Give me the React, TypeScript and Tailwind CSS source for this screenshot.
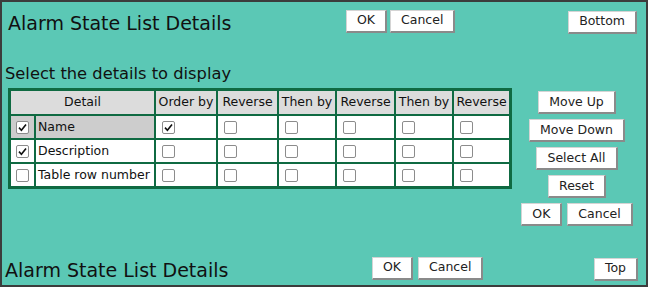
import * as React from 'react';

const FONT = { fontFamily: '"DejaVu Sans", Verdana, sans-serif' };

function Btn({ children }: { children: React.ReactNode }) {
  return (
    <button
      className="h-[23px] px-[10px] bg-white text-[12.5px] leading-none text-[#222] border-t border-l border-[#d4d4d4] border-r-2 border-b-2 border-r-[#8a8a8a] border-b-[#8a8a8a]"
      style={FONT}
    >
      {children}
    </button>
  );
}

function Check({ checked = false }: { checked?: boolean }) {
  return (
    <span className="inline-flex h-[13px] w-[13px] items-center justify-center rounded-[2px] border border-[#8c8c8c] bg-white">
      {checked && (
        <svg width="11" height="11" viewBox="0 0 11 11">
          <path d="M2 5.6 L4.4 8.2 L9 2.4" fill="none" stroke="#111" strokeWidth="1.6" />
        </svg>
      )}
    </span>
  );
}

const headers = ['Order by', 'Reverse', 'Then by', 'Reverse', 'Then by', 'Reverse'];

const rows = [
  { name: 'Name', shown: true, order: true, highlight: true },
  { name: 'Description', shown: true, order: false, highlight: false },
  { name: 'Table row number', shown: false, order: false, highlight: false },
];

export default function App() {
  return (
    <div
      className="flex h-[287px] w-[648px] flex-col border-2 border-[#3c3c3c] bg-[#5bc8b5] text-[#111]"
      style={FONT}
    >
      {/* Header */}
      <div className="mt-[7px] flex h-[24px] items-center">
        <div className="w-[344px] pl-[6px] pt-[5px] text-[19px] leading-none">Alarm State List Details</div>
        <div className="flex gap-[3px]">
          <Btn>OK</Btn>
          <Btn>Cancel</Btn>
        </div>
        <div className="ml-auto mr-[9px]">
          <Btn>Bottom</Btn>
        </div>
      </div>

      <div className="mt-[31px] h-[20px] pl-[3px] text-[16.3px] leading-[20px]">Select the details to display</div>

      {/* Table + side buttons */}
      <div className="mt-[4px] flex items-start">
        <div className="ml-[6px] grid grid-cols-[23px_118px_60px_59px_56px_57px_56px_55px] grid-rows-[23px_22px_22px_22px] gap-[2px] border-[3px] border-[#0f6a42] bg-[#0f6a42] text-[12.5px]">
          <div className="col-span-2 flex items-center justify-center bg-[#dcdcdc]">Detail</div>
          {headers.map((h, i) => (
            <div key={i} className="flex items-center justify-center bg-[#dcdcdc] whitespace-nowrap">
              {h}
            </div>
          ))}
          {rows.map((r) => (
            <React.Fragment key={r.name}>
              <div className={`flex items-center justify-center ${r.highlight ? 'bg-[#cdcdcd]' : 'bg-white'}`}>
                <Check checked={r.shown} />
              </div>
              <div className={`flex items-center pl-[2px] whitespace-nowrap ${r.highlight ? 'bg-[#cdcdcd]' : 'bg-white'}`}>
                {r.name}
              </div>
              {headers.map((_, i) => (
                <div key={i} className="flex items-center bg-white pl-[6px]">
                  <Check checked={i === 0 && r.order} />
                </div>
              ))}
            </React.Fragment>
          ))}
        </div>

        <div className="mt-[3px] flex w-[130px] flex-col items-center gap-[5px]">
          <Btn>Move Up</Btn>
          <Btn>Move Down</Btn>
          <Btn>Select All</Btn>
          <Btn>Reset</Btn>
          <div className="flex gap-[5px]">
            <Btn>OK</Btn>
            <Btn>Cancel</Btn>
          </div>
        </div>
      </div>

      {/* Footer */}
      <div className="mb-[5px] mt-auto flex h-[24px] items-center">
        <div className="w-[370px] pl-[3px] pt-[4px] text-[19px] leading-none">Alarm State List Details</div>
        <div className="flex gap-[5px]">
          <Btn>OK</Btn>
          <Btn>Cancel</Btn>
        </div>
        <div className="ml-auto mr-[8px]">
          <Btn>Top</Btn>
        </div>
      </div>
    </div>
  );
}
